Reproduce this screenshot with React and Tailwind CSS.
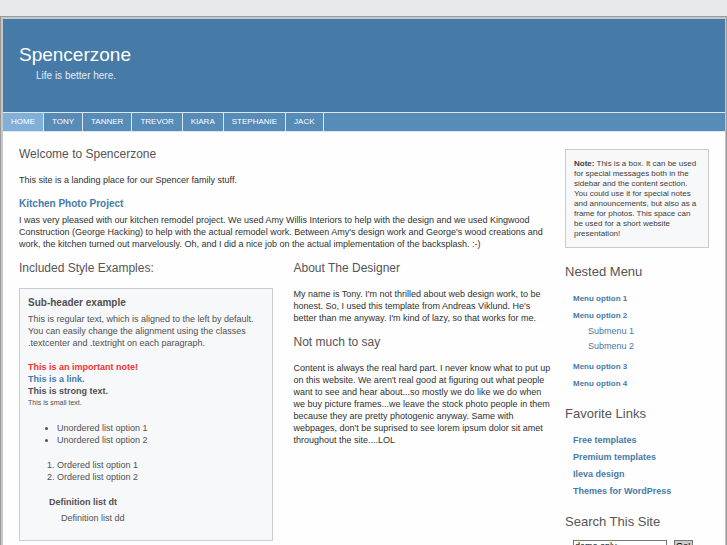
import React from 'react';

const NAV_ITEMS = ['Home', 'Tony', 'Tanner', 'Trevor', 'Kiara', 'Stephanie', 'Jack'];

const MENU = [
    { label: 'Menu option 1' },
    { label: 'Menu option 2', children: ['Submenu 1', 'Submenu 2'] },
    { label: 'Menu option 3' },
    { label: 'Menu option 4' }
];

const LINKS = ['Free templates', 'Premium templates', 'Ileva design', 'Themes for WordPress'];

const Heading = ({ children }) => (
    <h2 className="text-[12px] leading-4 text-[#555555]">{children}</h2>
);

const SidebarHeading = ({ children }) => (
    <h2 className="text-[13px] leading-4 text-[#555555]">{children}</h2>
);

const Header = () => (
    <header>
        <div className="h-[93px] bg-[#467aa7] px-4 pt-6 text-white">
            <h1 className="text-[19px] leading-6">Spencerzone</h1>
            <p className="pl-[17px] text-[10px] leading-[18px] text-[#e4edf5]">Life is better here.</p>
        </div>
        <nav className="flex border-y border-[#dce6ef] bg-[#578bb8]">
            {NAV_ITEMS.map((item, i) => (
                <a
                    key={item}
                    href="#"
                    className={`border-r border-[#dce6ef] px-2 text-[8px] leading-[18px] uppercase text-white hover:bg-[#80b0da] ${i === 0 ? 'bg-[#80b0da]' : ''}`}
                >
                    {item}
                </a>
            ))}
        </nav>
    </header>
);

const StyleExamples = () => (
    <div className="mt-3 border border-[#cccccc] bg-[#f7f8fa] px-2 pt-2 pb-4 text-[#505050]">
        <h3 className="text-[10px] leading-3 font-bold">Sub-header example</h3>
        <p className="mt-1">
            This is regular text, which is aligned to the left by default.<br />
            You can easily change the alignment using the classes<br />
            .textcenter and .textright on each paragraph.
        </p>
        <div className="mt-3 font-bold">
            <p className="text-[#f03030]">This is an important note!</p>
            <a href="#" className="block text-[#467aa7]">This is a link.</a>
            <p>This is strong text.</p>
        </div>
        <p className="text-[7px]">This is small text.</p>
        <ul className="mt-[13px] list-disc pl-[29px]">
            <li>Unordered list option 1</li>
            <li>Unordered list option 2</li>
        </ul>
        <ol className="mt-[13px] list-decimal pl-[29px]">
            <li>Ordered list option 1</li>
            <li>Ordered list option 2</li>
        </ol>
        <dl className="mt-[13px] pl-[21px]">
            <dt className="font-bold">Definition list dt</dt>
            <dd className="mt-1 pl-3">Definition list dd</dd>
        </dl>
    </div>
);

const Content = () => (
    <main className="min-w-0 flex-1 whitespace-nowrap">
        <Heading>Welcome to Spencerzone</Heading>
        <p className="mt-3">This site is a landing place for our Spencer family stuff.</p>
        <h3 className="mt-3 text-[10px] leading-3 font-bold text-[#467aa7]">Kitchen Photo Project</h3>
        <p className="mt-1">
            I was very pleased with our kitchen remodel project. We used Amy Willis Interiors to help with the design and we used Kingwood<br />
            Construction (George Hacking) to help with the actual remodel work. Between Amy's design work and George's wood creations and<br />
            work, the kitchen turned out marvelously. Oh, and I did a nice job on the actual implementation of the backsplash. :-)
        </p>
        <div className="mt-[10px] grid grid-cols-2 gap-[21px]">
            <section>
                <Heading>Included Style Examples:</Heading>
                <StyleExamples />
            </section>
            <section>
                <Heading>About The Designer</Heading>
                <p className="mt-3">
                    My name is Tony. I'm not thrilled about web design work, to be<br />
                    honest. So, I used this template from Andreas Viklund. He's<br />
                    better than me anyway. I'm kind of lazy, so that works for me.
                </p>
                <div className="mt-[10px]">
                    <Heading>Not much to say</Heading>
                </div>
                <p className="mt-3">
                    Content is always the real hard part. I never know what to put up<br />
                    on this website. We aren't real good at figuring out what people<br />
                    want to see and hear about...so mostly we do like we do when<br />
                    we buy picture frames...we leave the stock photo people in them<br />
                    because they are pretty photogenic anyway. Same with<br />
                    webpages, don't be suprised to see lorem ipsum dolor sit amet<br />
                    throughout the site....LOL
                </p>
            </section>
        </div>
    </main>
);

const Sidebar = () => (
    <aside className="w-36 shrink-0">
        <div className="mt-[3px] border border-[#cccccc] bg-[#f7f8fa] p-2 pt-[9px] text-[8px] leading-[10px] text-[#404040]">
            <strong>Note:</strong> This is a box. It can be used<br />
            for special messages both in the<br />
            sidebar and the content section.<br />
            You could use it for special notes<br />
            and announcements, but also as a<br />
            frame for photos. This space can<br />
            be used for a short website<br />
            presentation!
        </div>
        <div className="mt-4">
            <SidebarHeading>Nested Menu</SidebarHeading>
        </div>
        <ul className="mt-[10px] pl-2 text-[8px] leading-[17px] text-[#467aa7]">
            {MENU.map((item) => (
                <li key={item.label}>
                    <a href="#" className="font-bold">{item.label}</a>
                    {item.children && (
                        <ul className="mb-1 pl-[15px] text-[9px] leading-[15px]">
                            {item.children.map((child) => (
                                <li key={child}><a href="#">{child}</a></li>
                            ))}
                        </ul>
                    )}
                </li>
            ))}
        </ul>
        <div className="mt-[14px]">
            <SidebarHeading>Favorite Links</SidebarHeading>
        </div>
        <ul className="mt-[10px] pl-2 leading-[17px] font-bold text-[#467aa7]">
            {LINKS.map((link) => (
                <li key={link}><a href="#">{link}</a></li>
            ))}
        </ul>
        <div className="mt-[14px]">
            <SidebarHeading>Search This Site</SidebarHeading>
        </div>
        <form className="mt-[10px] flex gap-[7px] pl-2" onSubmit={(e) => e.preventDefault()}>
            <input
                type="text"
                aria-label="Search This Site"
                defaultValue="demo only"
                className="h-3 w-[94px] border border-[#777777] bg-white px-px text-[9px] leading-[10px] text-black"
            />
            <button type="submit" className="h-3 border border-[#777777] bg-[#cccccc] px-px text-[9px] leading-[10px] text-black">Go!</button>
        </form>
    </aside>
);

const App = () => (
    <div className="h-screen overflow-hidden bg-[#e8e9eb] pt-4 font-['Liberation_Sans',Arial,sans-serif] text-[9px] leading-3 text-[#303030]">
        <div className="min-h-screen border border-[#999999] bg-[#fefefe]">
            <div className="border border-t-2 border-l-2 border-[#c4c8cc]">
                <Header />
                <div className="flex gap-[18px] px-4 pt-[14px] pb-6">
                    <Content />
                    <Sidebar />
                </div>
            </div>
        </div>
    </div>
);

export default App;
